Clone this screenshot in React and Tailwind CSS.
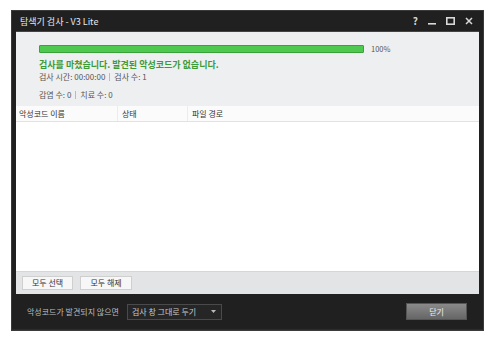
export default function App() {
  const font = { fontFamily: '"Noto Sans CJK KR", "Noto Sans", sans-serif' };
  return (
    <div className="w-[494px] h-[341px] bg-white pt-[10px] pl-[11px]" style={font}>
      <div className="w-[473px] h-[321px] bg-[#202020] flex flex-col border border-[#3a3a3a]">
        {/* title bar */}
        <div className="h-[20px] flex items-center pl-[8px] pr-[10px] text-white shrink-0">
          <span className="text-[9px] leading-none text-[#e8e8e8]">탐색기 검사 - V3 Lite</span>
          <div className="ml-auto flex items-center gap-[10px] text-[#d8d8d8]">
            <span className="text-[10px] leading-none font-bold">?</span>
            <svg width="8" height="8" viewBox="0 0 8 8"><rect x="0" y="6" width="8" height="1.6" fill="#d8d8d8" /></svg>
            <svg width="9" height="8" viewBox="0 0 9 8"><rect x="0.8" y="0.8" width="7.4" height="6.4" fill="none" stroke="#d8d8d8" strokeWidth="1.6" /></svg>
            <svg width="8" height="8" viewBox="0 0 8 8"><path d="M1 1L7 7M7 1L1 7" stroke="#d8d8d8" strokeWidth="1.5" /></svg>
          </div>
        </div>
        {/* inner panel */}
        <div className="mx-[4px] h-[263px] bg-[#eeeff0] flex flex-col shrink-0 border-t border-[#444]">
          <div className="pl-[23px] pt-[13px] h-[74px] shrink-0">
            <div className="flex items-center">
              <div className="w-[325px] h-[8px] bg-[#4fc850] border border-[#3aa23b] rounded-[1px]" />
              <span className="ml-[7px] text-[7.5px] text-[#555] leading-none">100%</span>
            </div>
            <div className="mt-[6px] text-[9px] font-bold text-[#3d9a36] leading-[12px]">검사를 마쳤습니다. 발견된 악성코드가 없습니다.</div>
            <div className="text-[8px] text-[#555] leading-[12px] flex items-center">
              <span>검사 시간: 00:00:00</span>
              <span className="mx-[4px] w-px h-[8px] bg-[#bbb]" />
              <span>검사 수: 1</span>
            </div>
            <div className="mt-[6px] text-[8px] text-[#555] leading-[12px] flex items-center">
              <span>감염 수: 0</span>
              <span className="mx-[4px] w-px h-[8px] bg-[#bbb]" />
              <span>치료 수: 0</span>
            </div>
          </div>
          {/* table */}
          <div className="flex-1 bg-white flex flex-col">
            <div className="h-[16px] flex items-center text-[8px] text-[#333] border-b border-[#e2e2e2] bg-[#fbfbfb]">
              <div className="w-[102px] pl-[3px] border-r border-[#ececec] h-full flex items-center">악성코드 이름</div>
              <div className="w-[70px] pl-[4px] border-r border-[#ececec] h-full flex items-center">상태</div>
              <div className="flex-1 pl-[4px] h-full flex items-center">파일 경로</div>
            </div>
            <div className="flex-1" />
          </div>
          <div className="h-[23px] bg-[#e3e4e5] border-t border-[#d6d6d6] flex items-center pl-[6px] gap-[7px] shrink-0">
            <button className="w-[51px] h-[14px] bg-[#f7f7f7] border border-[#cfcfcf] text-[8px] text-[#333] leading-none">모두 선택</button>
            <button className="w-[52px] h-[14px] bg-[#f7f7f7] border border-[#cfcfcf] text-[8px] text-[#333] leading-none">모두 해제</button>
          </div>
        </div>
        {/* bottom */}
        <div className="flex-1 flex items-center pl-[15px] pr-[16px] border-b border-[#2c2c2c]">
          <span className="text-[8px] text-[#bdbdbd] leading-none">악성코드가 발견되지 않으면</span>
          <div className="ml-[8px] w-[95px] h-[16px] border border-[#4a4a4a] bg-[#262626] flex items-center pl-[4px] pr-[5px] text-[8px] text-[#c8c8c8]">
            <span className="leading-none">검사 창 그대로 두기</span>
            <svg className="ml-auto" width="5" height="3" viewBox="0 0 5 3"><path d="M0 0H5L2.5 3Z" fill="#bbb" /></svg>
          </div>
          <button className="ml-auto w-[61px] h-[17px] bg-gradient-to-b from-[#8a8a8a] to-[#666] border border-[#555] text-[8px] text-[#eee] leading-none">닫기</button>
        </div>
      </div>
    </div>
  );
}
